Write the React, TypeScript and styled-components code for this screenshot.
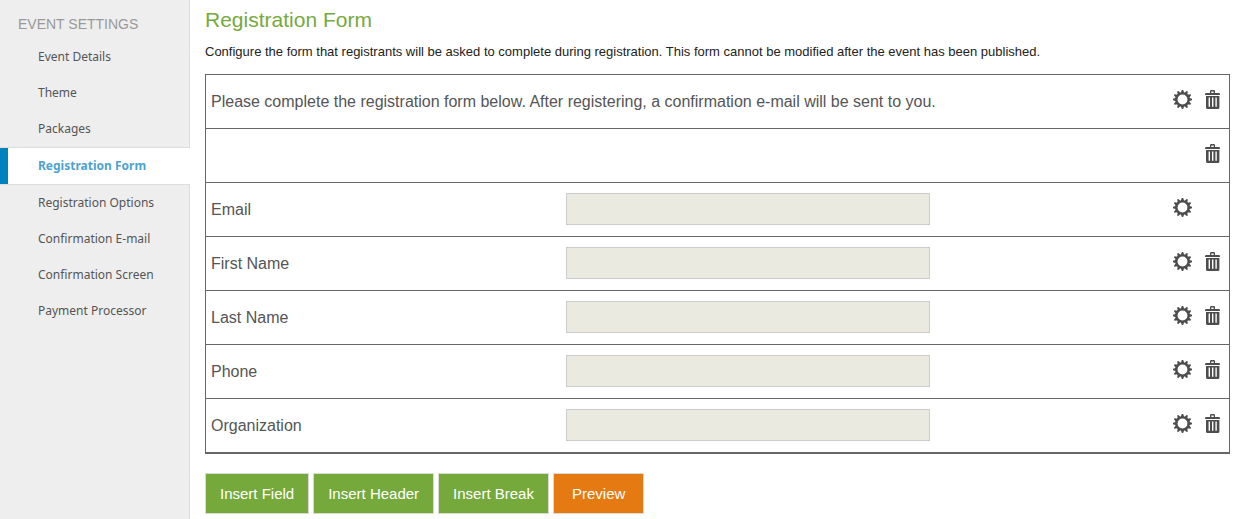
import React from "react";
import styled, { createGlobalStyle, css } from "styled-components";

const GlobalStyle = createGlobalStyle`
  *, *::before, *::after { box-sizing: border-box; }
  body {
    margin: 0;
    background: #fff;
    font-family: "Liberation Sans", Arial, sans-serif;
  }
`;

const Page = styled.div`
  display: flex;
  min-height: 100vh;
`;

const Sidebar = styled.nav`
  flex: 0 0 190px;
  padding-top: 9px;
  background: linear-gradient(#ddd, #ddd) right / 1px 100% no-repeat #eee;
`;

const SidebarTitle = styled.h2`
  margin: 0;
  padding-left: 18px;
  font-size: 14px;
  font-weight: 400;
  line-height: 30px;
  color: #999;
`;

const NavList = styled.ul`
  margin: 0;
  padding: 0;
  list-style: none;
`;

const NavItem = styled.li<{ $active?: boolean }>`
  border: solid #ddd;
  border-width: ${({ $active }) => ($active ? "1px 0" : "0")};
`;

const NavLink = styled.a<{ $active?: boolean }>`
  display: block;
  padding-left: 38px;
  font-family: "Noto Sans", sans-serif;
  font-size: 12px;
  line-height: 36px;
  color: #555;
  text-decoration: none;
  ${({ $active }) =>
    $active &&
    css`
      font-weight: 700;
      color: #4ba3cf;
      background: linear-gradient(#0082bf, #0082bf) left / 8px 100% no-repeat #fff;
    `}
`;

const Main = styled.main`
  flex: 1;
  min-width: 0;
  padding: 5px 6px 5px 15px;
`;

const Title = styled.h1`
  margin: 0;
  font-size: 21px;
  font-weight: 400;
  line-height: 30px;
  color: #76a93c;
`;

const Intro = styled.p`
  margin: 7px 0 12px;
  font-size: 13px;
  line-height: 20px;
  color: #222;
`;

const FormTable = styled.div`
  border: 1px solid #666;
`;

const Row = styled.div`
  display: grid;
  grid-template-columns: 355fr 364fr 294fr;
  align-items: center;
  min-height: 54px;
  padding: 0 5px;
  border-bottom: 1px solid #666;
`;

const MessageRow = styled(Row)`
  grid-template-columns: 1fr auto;
`;

const labelText = css`
  font-size: 16px;
  line-height: 24px;
  color: #555;
`;

const Message = styled.p`
  ${labelText}
  margin: 0;
`;

const FieldLabel = styled.label`
  ${labelText}
`;

const FieldInput = styled.input`
  width: 100%;
  height: 32px;
  margin: 0 0 1px;
  padding: 0 8px;
  border: 1px solid #ccc;
  border-radius: 0;
  background: #eaeae1;
  font: inherit;
`;

const Actions = styled.div`
  grid-column-end: -1;
  display: grid;
  grid-template-columns: 20px 16px;
  column-gap: 12px;
  justify-content: end;
  padding: 0 3px 3px 0;
`;

const IconButton = styled.button<{ $column: number }>`
  grid-column: ${({ $column }) => $column};
  display: block;
  height: 20px;
  padding: 0;
  border: 0;
  background: none;
  color: #4d4d4d;
  cursor: pointer;
  svg { display: block; }
`;

const ButtonBar = styled.div`
  display: flex;
  gap: 4px;
  margin-top: 19px;
`;

const ActionButton = styled.button<{ $accent?: boolean }>`
  height: 41px;
  padding: 0 ${({ $accent }) => ($accent ? 18 : 14)}px;
  border: 1px solid #d8dcd2;
  background: ${({ $accent }) => ($accent ? "#e57a12" : "#76a93c")};
  color: #fff;
  font-family: inherit;
  font-size: 15px;
  line-height: 20px;
  white-space: nowrap;
  cursor: pointer;
`;

const GearIcon = () => (
  <svg width="20" height="20" viewBox="0 0 20 20" aria-hidden="true">
    <circle cx="9.5" cy="9.5" r="6.1" fill="none" stroke="currentColor" strokeWidth="2.3" />
    {Array.from({ length: 12 }, (_, i) => (
      <path
        key={i}
        d="M7.7 3.2 8.8 0h1.4l1.1 3.2z"
        fill="currentColor"
        transform={`rotate(${i * 30} 9.5 9.5)`}
      />
    ))}
  </svg>
);

const TrashIcon = () => (
  <svg width="16" height="20" viewBox="0 0 16 20" aria-hidden="true">
    <path
      fill="currentColor"
      fillRule="evenodd"
      d="M5 3V1.2Q5 0 6.2 0h2.6Q10 0 10 1.2V3h3.6Q15 3 15 4.2V5H0v-.8Q0 3 1.4 3zM6.3 3h2.4V1.4H6.3zM1 6h13.4v11.5q0 1.5-1.5 1.5H2.5Q1 19 1 17.5zM3.6 7.6v9.2H5V7.6zM7 7.6v9.2h1.4V7.6zM10.4 7.6v9.2h1.4V7.6z"
    />
  </svg>
);

const navItems = [
  "Event Details",
  "Theme",
  "Packages",
  "Registration Form",
  "Registration Options",
  "Confirmation E-mail",
  "Confirmation Screen",
  "Payment Processor",
];

const fields = [
  { id: "email", label: "Email", removable: false },
  { id: "first-name", label: "First Name", removable: true },
  { id: "last-name", label: "Last Name", removable: true },
  { id: "phone", label: "Phone", removable: true },
  { id: "organization", label: "Organization", removable: true },
];

function RowActions({ name, edit = true, remove = true }: { name: string; edit?: boolean; remove?: boolean }) {
  return (
    <Actions>
      {edit && (
        <IconButton type="button" $column={1} aria-label={`Edit ${name}`}>
          <GearIcon />
        </IconButton>
      )}
      {remove && (
        <IconButton type="button" $column={2} aria-label={`Delete ${name}`}>
          <TrashIcon />
        </IconButton>
      )}
    </Actions>
  );
}

export default function App() {
  return (
    <>
      <GlobalStyle />
      <Page>
        <Sidebar aria-label="Event settings">
          <SidebarTitle>EVENT SETTINGS</SidebarTitle>
          <NavList>
            {navItems.map((item) => {
              const active = item === "Registration Form";
              return (
                <NavItem key={item} $active={active}>
                  <NavLink href="#" $active={active} aria-current={active ? "page" : undefined}>
                    {item}
                  </NavLink>
                </NavItem>
              );
            })}
          </NavList>
        </Sidebar>
        <Main>
          <Title>Registration Form</Title>
          <Intro>
            Configure the form that registrants will be asked to complete during registration. This form cannot be
            modified after the event has been published.
          </Intro>
          <FormTable>
            <MessageRow>
              <Message>
                Please complete the registration form below. After registering, a confirmation e-mail will be sent to
                you.
              </Message>
              <RowActions name="header" />
            </MessageRow>
            <Row>
              <RowActions name="break" edit={false} />
            </Row>
            {fields.map(({ id, label, removable }) => (
              <Row key={id}>
                <FieldLabel htmlFor={id}>{label}</FieldLabel>
                <FieldInput id={id} type="text" readOnly />
                <RowActions name={label} remove={removable} />
              </Row>
            ))}
          </FormTable>
          <ButtonBar>
            <ActionButton type="button">Insert Field</ActionButton>
            <ActionButton type="button">Insert Header</ActionButton>
            <ActionButton type="button">Insert Break</ActionButton>
            <ActionButton type="button" $accent>
              Preview
            </ActionButton>
          </ButtonBar>
        </Main>
      </Page>
    </>
  );
}
